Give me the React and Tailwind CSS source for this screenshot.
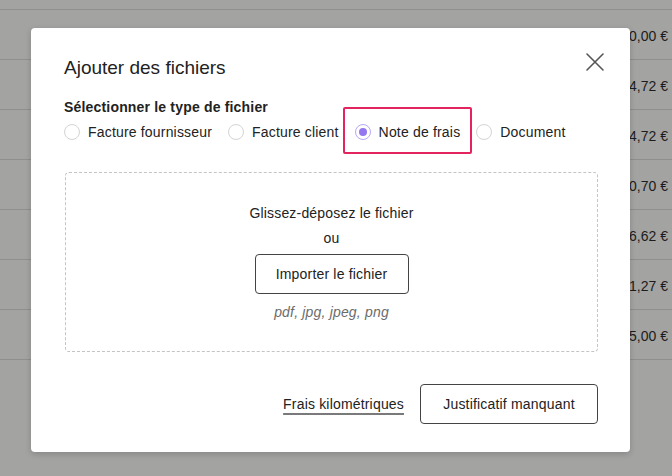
import { useState } from 'react';

const amounts = ['120,00 €', '54,72 €', '54,72 €', '80,70 €', '36,62 €', '11,27 €', '25,00 €'];
const types = ['Facture fournisseur', 'Facture client', 'Note de frais', 'Document'];

function Radio({ checked }) {
  return (
    <span
      className={`flex h-4 w-4 shrink-0 items-center justify-center rounded-full border ${
        checked ? 'border-[#b9a8f3]' : 'border-[#d4d4d4]'
      }`}
    >
      {checked && <span className="h-2 w-2 rounded-full bg-[#9277f0]" />}
    </span>
  );
}

export default function App() {
  const [selected, setSelected] = useState('Note de frais');

  return (
    <div
      className="relative h-[476px] w-[672px] overflow-hidden bg-[#a3a3a2] text-[#222]"
      style={{ fontFamily: '"Liberation Sans", Arial, sans-serif' }}
    >
      {/* Table behind the backdrop */}
      <div className="h-[10px] border-b border-[#8f8f8e]" />
      {amounts.map((a, i) => (
        <div key={i} className="flex h-[50px] items-center justify-end border-b border-[#8f8f8e] pr-[4px] pt-[3px] text-[14px] text-[#1c1c1c]">
          {a}
        </div>
      ))}

      {/* Modal */}
      <div className="absolute left-[31px] top-[28px] flex h-[424px] w-[599px] flex-col rounded-[4px] bg-white px-[33px] pt-[28px] tracking-[0.18px] shadow-[0_2px_6px_rgba(0,0,0,0.18)]">
        <div className="flex items-start justify-between">
          <h2 className="text-[19px] font-medium leading-6 tracking-normal text-[#222]">Ajouter des fichiers</h2>
          <button className="-mr-[10px] -mt-[6px] h-6 w-6 text-[#555]">
            <svg viewBox="0 0 24 24" className="h-6 w-6" fill="none" stroke="currentColor" strokeWidth="1.6" strokeLinecap="round">
              <path d="M4 4 L20 20 M20 4 L4 20" />
            </svg>
          </button>
        </div>

        <p className="mt-[17px] text-[14px] font-bold leading-5 text-[#222]">Sélectionner le type de fichier</p>
        <div className="mt-[5px] flex items-center gap-4">
          {types.map((t) => (
            <label
              key={t}
              onClick={() => setSelected(t)}
              className="relative flex h-5 cursor-pointer items-center gap-2 text-[14px] text-[#222]"
            >
              <Radio checked={selected === t} />
              <span>{t}</span>
              {t === 'Note de frais' && (
                <span className="pointer-events-none absolute -bottom-[12px] -left-[12px] -right-[12px] -top-[15px] rounded-[2px] border-2 border-[#e3245f]" />
              )}
            </label>
          ))}
        </div>

        <div className="mt-[30px] -mr-[1px] ml-[1px] flex h-[180px] flex-col items-center rounded-[4px] border border-dashed border-[#c4c4c4] pt-[30px] text-[14px] leading-5">
          <p>Glissez-déposez le fichier</p>
          <p className="mt-[5px]">ou</p>
          <button className="mt-[6px] h-10 w-[154px] rounded-[4px] border border-[#444] text-[14px] text-[#222]">
            Importer le fichier
          </button>
          <p className="mt-2 italic text-[#6b6b6b]">pdf, jpg, jpeg, png</p>
        </div>

        <div className="-mr-[1px] mt-[32px] flex items-center justify-end gap-4">
          <a href="#" className="text-[14px] text-[#222] underline decoration-[#7a7a7a] decoration-2 underline-offset-[4px]">
            Frais kilométriques
          </a>
          <button className="h-10 w-[178px] rounded-[4px] border border-[#444] text-[14px] text-[#222]">
            Justificatif manquant
          </button>
        </div>
      </div>
    </div>
  );
}
